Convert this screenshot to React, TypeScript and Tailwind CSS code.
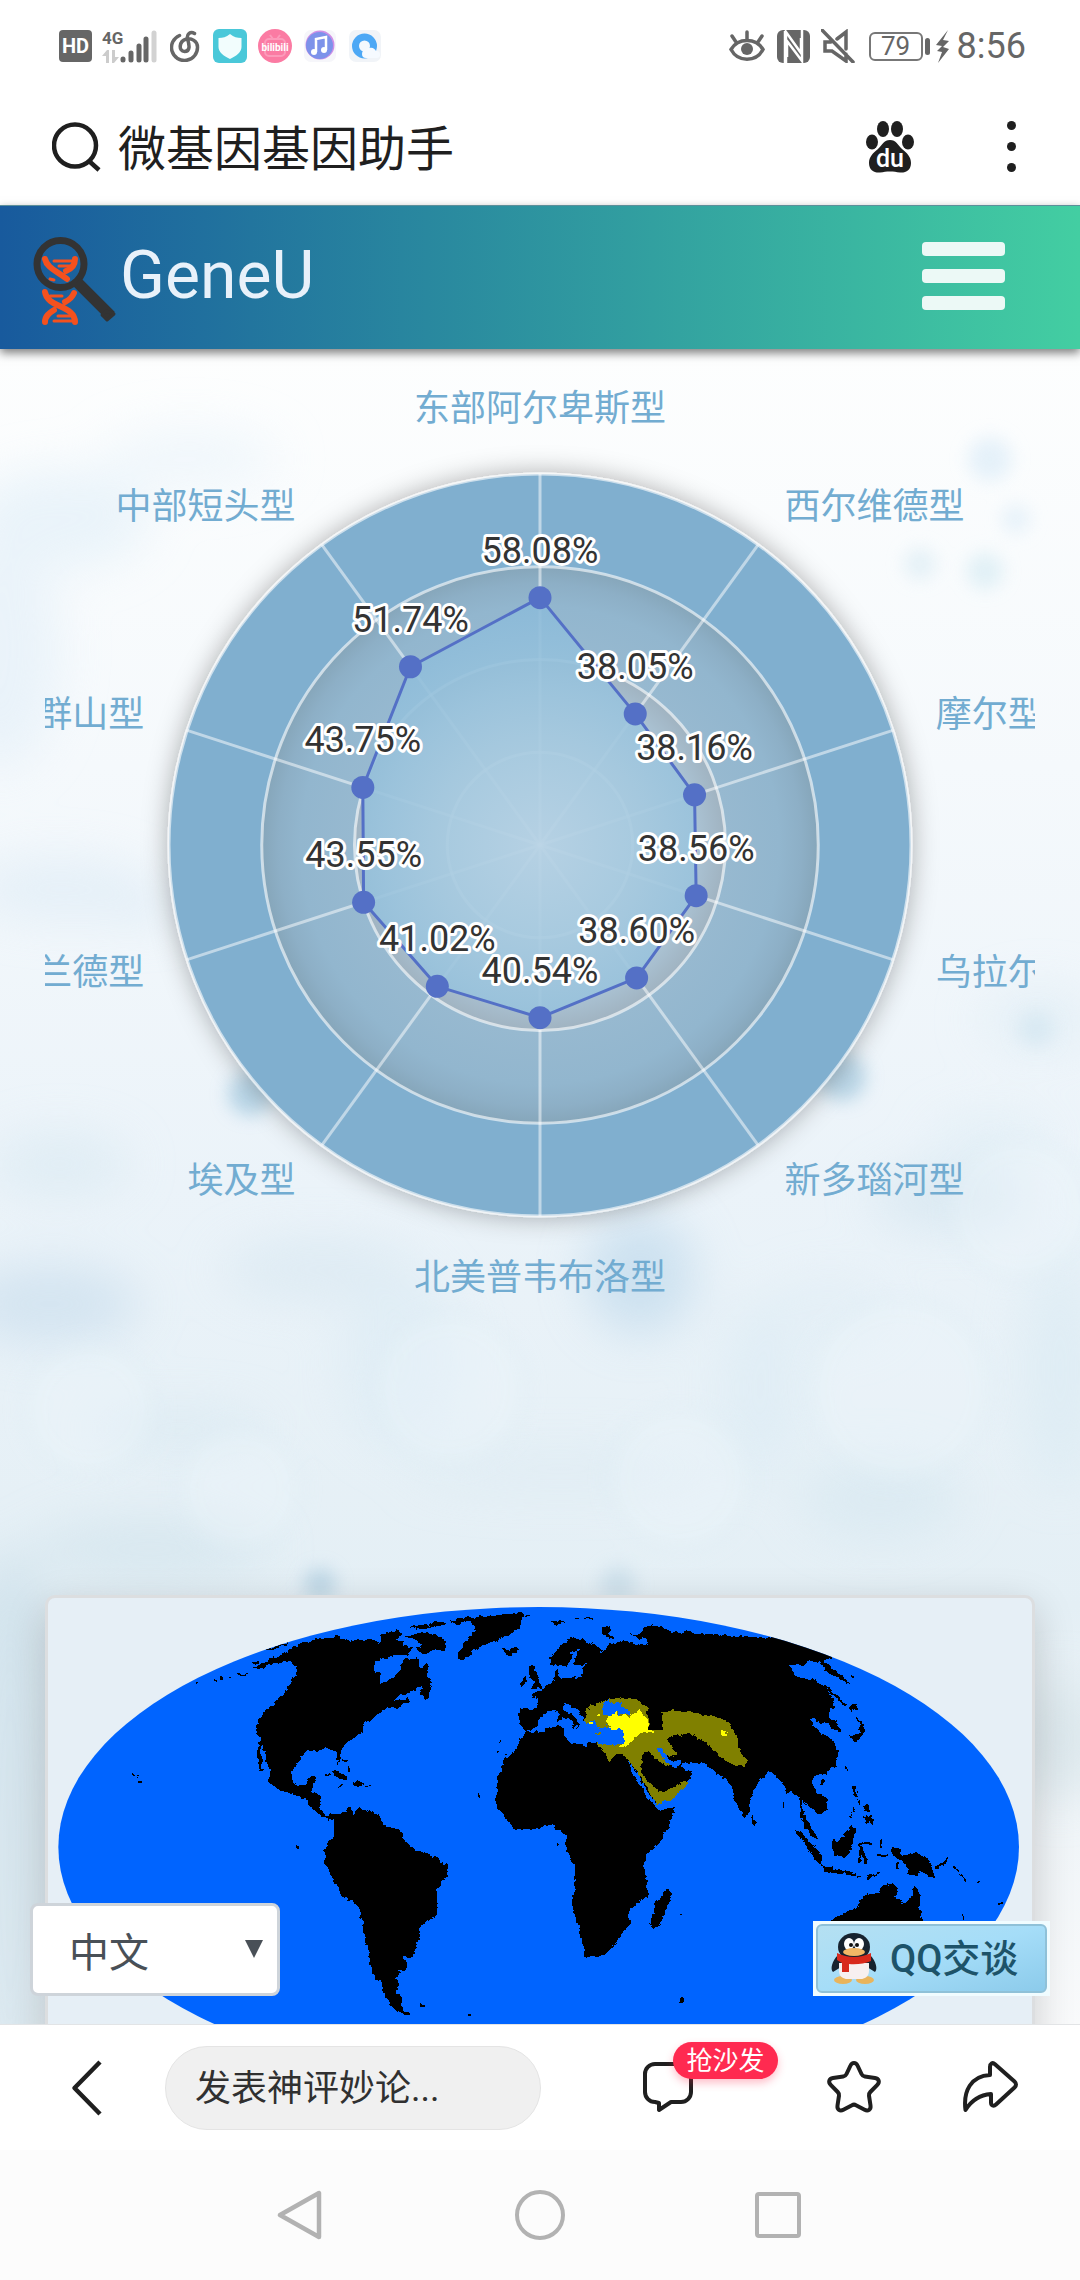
import type { ReactNode } from "react";

const types = [
    { name: "东部阿尔卑斯型", value: 58.08 },
    { name: "西尔维德型", value: 38.05 },
    { name: "摩尔型", value: 38.16 },
    { name: "乌拉尔", value: 38.56 },
    { name: "新多瑙河型", value: 38.6 },
    { name: "北美普韦布洛型", value: 40.54 },
    { name: "埃及型", value: 41.02 },
    { name: "兰德型", value: 43.55 },
    { name: "群山型", value: 43.75 },
    { name: "中部短头型", value: 51.74 },
];

const CX = 495;
const CY = 496;
const RADIUS = 371;
const MAX = 87.12;

function polar(index: number, r: number) {
    const angle = (index * Math.PI * 2) / types.length;
    return { x: CX + r * Math.sin(angle), y: CY - r * Math.cos(angle) };
}

function StatusBar() {
    return (
        <div className="flex h-[92px] items-center justify-between pl-[59px] pr-[54px] text-[#666]">
            <div className="flex items-center">
                <span className="flex h-8 w-[33px] items-center justify-center rounded bg-[#666] text-[20px] font-bold text-white">
                    HD
                </span>
                <svg className="ml-2.5 h-9 w-[56px]" viewBox="0 0 56 36">
                    <text x="0" y="16" fontSize="17" fontWeight="700" fill="#666">4G</text>
                    <path d="M0 28l5-6h2v13H4v-7ZM10 22h3v7h4l-5 6h-2Z" fill="#ccc" />
                    <g strokeWidth="5" strokeLinecap="round" stroke="#666">
                        <path d="M21 31v1M29 25v7M37 18v14M44 11v21" />
                        <path d="M52 5v27" stroke="#d2d2d2" />
                    </g>
                </svg>
                <svg className="ml-3 h-8 w-[30px]" viewBox="0 0 29 32" fill="none" stroke="#666" strokeWidth="3.500" strokeLinecap="round">
                    <path d="M9 5.500A13 13 0 1 0 27 17C27 11 21 8 16 9 8 11 8 21.500 14 21.500c6 0 5-6.500 3-12.500-1-5 3-8 7-5.500" />
                </svg>
                <svg className="ml-[13px] size-[34px]" viewBox="0 0 34 34">
                    <rect width="34" height="34" rx="6" fill="#4ac8d9" />
                    <path d="M17 5c4 3 7 4 11.500 4v9c0 5-5 9-11.500 12C10.500 27 5.500 23 5.500 18V9C10 9 13 8 17 5Z" fill="#f2fdfd" />
                </svg>
                <svg className="ml-[11px] size-[34px]" viewBox="0 0 34 34">
                    <circle cx="17" cy="17" r="17" fill="#fb7ba3" />
                    <rect x="7" y="10" width="20" height="17" rx="4" fill="none" stroke="#fc9aba" strokeWidth="2" />
                    <path d="M12 6l3 4M22 6l-3 4" stroke="#fc9aba" strokeWidth="2" />
                    <text x="17" y="22" fontSize="10" fontWeight="700" textAnchor="middle" fill="#fff">bilibili</text>
                </svg>
                <svg className="ml-3 size-8" viewBox="0 0 32 32">
                    <rect width="32" height="32" rx="7" fill="#f6f6fa" />
                    <circle cx="16" cy="15" r="14.500" fill="#cf8fe6" />
                    <circle cx="15.500" cy="15.500" r="13.500" fill="#7d92ea" />
                    <path d="M12 22V9l10-2v13" fill="none" stroke="#fff" strokeWidth="2.500" />
                    <circle cx="10" cy="22" r="3" fill="#fff" />
                    <circle cx="20" cy="20" r="3" fill="#fff" />
                </svg>
                <svg className="ml-[13px] size-8" viewBox="0 0 32 32">
                    <rect width="32" height="32" rx="7" fill="#f1f4f8" />
                    <circle cx="15.500" cy="16" r="9" fill="#f4f8fd" stroke="#4da8f5" strokeWidth="7" />
                    <path d="M17 28a4 4 0 0 1 0-8 6 6 0 0 1 10 1 3.500 3.500 0 0 1 1 7Z" fill="#f6faff" />
                </svg>
            </div>
            <div className="flex items-center">
                <svg className="h-8 w-9" viewBox="0 0 36 32" fill="none" stroke="#666" strokeWidth="3.500" strokeLinecap="round">
                    <path d="M2 19.500C9 7.500 27 7.500 34 19.500 27 32.500 9 32.500 2 19.500ZM18 2v7M3 6l4 6M33 6l-4 6" />
                    <circle cx="18" cy="19" r="6" fill="#666" stroke="none" />
                </svg>
                <svg className="ml-3 size-[33px]" viewBox="0 0 33 33">
                    <rect width="33" height="33" rx="6" fill="#666" />
                    <path d="M8 33V1M9 33V2l15 21V8M25 0v31L10 11v16" fill="none" stroke="#fff" strokeWidth="2.500" />
                </svg>
                <svg className="ml-[11px] size-[34px]" viewBox="0 0 34 34" fill="none" stroke="#666" strokeWidth="3.500">
                    <path d="M1 1l31 32M25 20V3l-9 7M10 13H4v9h7l14 10v-7" strokeLinecap="round" />
                </svg>
                <span className="ml-3.5 flex h-[29px] w-[54px] items-center justify-center rounded-md border-2 border-[#777] text-[26px] leading-none">
                    79
                </span>
                <span className="ml-0.5 h-[17px] w-[5px] rounded-sm bg-[#666]" />
                <svg className="ml-1.5 h-[33px] w-[13px]" viewBox="0 0 13 33">
                    <path d="M12 0L0 15l6 1-5 5 5 1-4 11 11-14-6-2 6-6-6-1Z" fill="#666" />
                </svg>
                <span className="ml-2 text-[36px] leading-none">8:56</span>
            </div>
        </div>
    );
}

function SearchBar() {
    return (
        <div className="flex h-[113px] items-center pb-1 pl-[52px] pr-[60px]">
            <svg className="size-[50px] shrink-0" viewBox="0 0 50 50" fill="none" stroke="#1f1f1f" strokeWidth="4.500">
                <circle cx="23" cy="23.500" r="21" />
                <path d="M37 39l10 9" />
            </svg>
            <input
                type="text"
                aria-label="搜索"
                defaultValue="微基因基因助手"
                className="ml-4 h-16 min-w-0 flex-1 bg-transparent pb-1 text-[48px] leading-none text-[#1f1f1f] outline-none"
            />
            <button aria-label="百度" className="ml-6">
                <svg className="h-[52px] w-12" viewBox="0 0 48 52" fill="#1f1f1f">
                    <ellipse cx="6" cy="21" rx="6" ry="7.500" />
                    <ellipse cx="17" cy="8" rx="6" ry="8" />
                    <ellipse cx="31" cy="8" rx="6" ry="8" />
                    <ellipse cx="42" cy="21" rx="6" ry="7.500" />
                    <path d="M24 19c6 0 8 5 12 9 5 4 9 8 9 14 0 7-5 10-11 9.500-4-.5-6-1-10-1s-6 .5-10 1C8 52 3 49 3 42c0-6 4-10 9-14 4-4 6-9 12-9Z" />
                    <text x="24" y="46" fontSize="25" fontWeight="500" textAnchor="middle" fill="#fff">du</text>
                </svg>
            </button>
            <button aria-label="更多" className="ml-[88px] flex w-[18px] flex-col items-center gap-3">
                <span className="size-[9px] rounded-full bg-[#1f1f1f]" />
                <span className="size-[9px] rounded-full bg-[#1f1f1f]" />
                <span className="size-[9px] rounded-full bg-[#1f1f1f]" />
            </button>
        </div>
    );
}

function Header() {
    return (
        <header className="relative z-10 flex h-36 items-center justify-between border-t border-[#5d8f9a] bg-gradient-to-r from-[#185a9d] to-[#43cea2] pb-[3px] pl-[33px] pr-[75px] shadow-[0_4px_9px_rgba(0,0,0,0.5)] [--tw-gradient-position:to_right]">
            <a href="#" className="flex items-center gap-px text-[66px] leading-none text-[#e8f1fa]">
                <svg className="mt-3 h-[90px] w-[86px]" viewBox="0 0 86 90" fill="none">
                    <g stroke="#f4511e" strokeWidth="6" strokeLinecap="round">
                        <path d="M12 22c2 9 12 12 22 20M42 22c0 6-4 10-9 12M12 55c2 16 30 13 30 30M41 56c-2 5-5 7-9 9M12 85c0-6 4-9 9-12" />
                        <path d="M21 24h18M26 29h11M17 42l4 1M17 59h12M21 84h18M25 79h12" strokeWidth="3" />
                    </g>
                    <circle cx="27.500" cy="27" r="23.500" stroke="#333" strokeWidth="7" />
                    <path d="M44 45l34 34" stroke="#333" strokeWidth="11" />
                    <path d="M73 74l8 3-7 6-5-5Z" fill="#333" stroke="#333" strokeWidth="3" strokeLinejoin="round" />
                </svg>
                GeneU
            </a>
            <button aria-label="菜单" className="flex w-[83px] flex-col gap-[13px]">
                <span className="h-3.5 rounded bg-white/90" />
                <span className="h-3.5 rounded bg-white/90" />
                <span className="h-3.5 rounded bg-white/90" />
            </button>
        </header>
    );
}

const blobs = [
    [60, 170, 90, 50, "#dfeef8"], [190, 110, 90, 30, "#e8f3fa"], [60, 540, 90, 30, "#dbeaf5"],
    [0, 300, 60, 120, "#e1eef8"], [140, 560, 40, 14, "#d5e6f3"], [60, 815, 70, 30, "#d7e8f1"],
    [50, 955, 90, 40, "#c6dcec"], [320, 920, 100, 30, "#d6e6f0"], [640, 925, 55, 60, "#b9d6ea"],
    [950, 850, 80, 30, "#cfe2ed"], [990, 790, 60, 20, "#dcecf4"], [830, 960, 60, 30, "#e0edf5"],
    [1040, 670, 60, 30, "#deecf4"], [150, 1200, 120, 30, "#cfe2eb"], [10, 1500, 60, 300, "#c6dce7"],
    [1060, 1390, 50, 60, "#d3e1e6"], [560, 1120, 150, 20, "#dceaf2"], [880, 1150, 80, 40, "#d5e7f0"],
    [180, 1080, 90, 20, "#d6e7f0"], [400, 1010, 60, 90, "#dbebf4"], [760, 1040, 40, 90, "#dbebf4"],
    [1060, 1020, 40, 120, "#d9eaf3"],
] as const;

const dots = [
    [250, 745, 22, "#a3c9e0"], [842, 728, 24, "#a3c8de"], [990, 110, 22, "#dcecf8"], [985, 222, 18, "#d6ebf3"],
    [920, 215, 16, "#dcecf4"], [1016, 170, 14, "#deedf8"], [320, 1235, 16, "#aecde0"], [618, 1235, 18, "#c6dce8"],
    [1036, 680, 18, "#d3e6f1"],
] as const;

const cells = [
    [450, 1040, 75], [900, 1040, 90], [240, 1140, 60], [680, 1130, 70], [90, 1060, 65], [1020, 860, 70],
];

function Backdrop() {
    return (
        <svg className="absolute inset-0 size-full" viewBox="0 0 1080 1675" preserveAspectRatio="none">
            <defs>
                <linearGradient id="sky" x1="0" y1="0" x2="0" y2="1">
                    <stop offset="0" stopColor="#fdfefe" />
                    <stop offset="0.25" stopColor="#f5f9fc" />
                    <stop offset="0.5" stopColor="#ebf3f9" />
                    <stop offset="0.75" stopColor="#e4eff5" />
                    <stop offset="0.85" stopColor="#edf3f7" />
                    <stop offset="1" stopColor="#f9fafb" />
                </linearGradient>
                <filter id="haze" x="-20%" y="-20%" width="140%" height="140%">
                    <feGaussianBlur stdDeviation="24" />
                </filter>
                <filter id="soft" x="-20%" y="-20%" width="140%" height="140%">
                    <feGaussianBlur stdDeviation="9" />
                </filter>
            </defs>
            <rect width="1080" height="1675" fill="url(#sky)" />
            <g filter="url(#haze)" opacity="0.6">
                {blobs.map(([x, y, rx, ry, fill]) => (
                    <ellipse key={`${x}-${y}`} cx={x} cy={y} rx={rx} ry={ry} fill={fill} />
                ))}
            </g>
            <g filter="url(#soft)" opacity="0.7">
                {cells.map(([x, y, r]) => (
                    <circle key={`${x}-${y}`} cx={x} cy={y} r={r} fill="#eef5fb" fillOpacity="0.5" stroke="#dcebf4" strokeWidth="8" strokeOpacity="0.6" />
                ))}
                {dots.map(([x, y, r, fill]) => (
                    <circle key={`${x}-${y}`} cx={x} cy={y} r={r} fill={fill} />
                ))}
            </g>
        </svg>
    );
}

function RadarChart() {
    const points = types.map((t, i) => polar(i, (t.value / MAX) * RADIUS));
    const outline = points.map((p) => `${p.x},${p.y}`).join(" ");

    return (
        <svg className="block w-full" viewBox="0 0 990 990" role="img" aria-label="GeneU">
            <defs>
                <radialGradient id="band3">
                    <stop offset="0.670" stopColor="#97b9d0" />
                    <stop offset="0.860" stopColor="#92b6ce" />
                    <stop offset="0.940" stopColor="#8dafc6" />
                    <stop offset="1" stopColor="#86a6ba" />
                </radialGradient>
                <radialGradient id="band2">
                    <stop offset="0.6" stopColor="#b3c8d8" />
                    <stop offset="0.85" stopColor="#aac2d3" />
                    <stop offset="1" stopColor="#a0b3c1" />
                </radialGradient>
                <radialGradient id="area" gradientUnits="userSpaceOnUse" cx={CX} cy={CY} r="248">
                    <stop offset="0" stopColor="#b5d1e4" />
                    <stop offset="0.4" stopColor="#a5c9df" />
                    <stop offset="0.75" stopColor="#94c0db" />
                    <stop offset="1" stopColor="#8ab9d8" />
                </radialGradient>
                <filter id="glow" x="-15%" y="-15%" width="130%" height="130%">
                    <feDropShadow dx="0" dy="0" stdDeviation="13" floodColor="#000" floodOpacity="0.32" />
                </filter>
            </defs>

            <g stroke="#fff" strokeOpacity="0.6" strokeWidth="3">
                <circle cx={CX} cy={CY} r={RADIUS} fill="#80afcf" filter="url(#glow)" />
                <circle cx={CX} cy={CY} r={RADIUS * 0.75} fill="url(#band3)" />
                <circle cx={CX} cy={CY} r={RADIUS * 0.5} fill="url(#band2)" />
                <circle cx={CX} cy={CY} r={RADIUS * 0.25} fill="#bcd1df" />
                {types.map((t, i) => {
                    const end = polar(i, RADIUS);
                    return <line key={t.name} x1={CX} y1={CY} x2={end.x} y2={end.y} strokeOpacity="0.5" />;
                })}
            </g>

            <polygon points={outline} fill="url(#area)" fillOpacity="0.9" />
            <polygon points={outline} fill="none" stroke="#5470c6" strokeWidth="3" strokeLinejoin="round" />
            {points.map((p, i) => (
                <circle key={i} cx={p.x} cy={p.y} r="11.500" fill="#5470c6" />
            ))}

            <g fontSize="36" textAnchor="middle" fill="#333" stroke="#fff" strokeWidth="6" strokeLinejoin="round" className="[paint-order:stroke]">
                {types.map((t, i) => (
                    <text key={t.name} x={points[i].x} y={points[i].y - 35}>
                        {t.value.toFixed(2)}%
                    </text>
                ))}
            </g>

            <g fontSize="36" fill="#72acd1">
                {types.map((t, i) => {
                    const p = polar(i, RADIUS + 45);
                    const anchor = i % 5 === 0 ? "middle" : i < 5 ? "start" : "end";
                    const shift = i === 0 ? -8 : i === 5 ? 29 : 11;
                    return (
                        <text key={t.name} x={p.x} y={p.y + shift} textAnchor={anchor}>
                            {t.name}
                        </text>
                    );
                })}
            </g>
        </svg>
    );
}

function WorldMap() {
    return (
        <svg className="block w-full" viewBox="24 54 2952 1520" role="img" aria-label="世界地图">
            <defs>
                <clipPath id="globe">
                    <ellipse cx="1496" cy="801" rx="1441" ry="720" />
                </clipPath>
                <filter id="coast" x="0" y="0" width="100%" height="100%">
                    <feTurbulence type="fractalNoise" baseFrequency="0.06" numOctaves="2" seed="4" />
                    <feDisplacementMap in="SourceGraphic" scale="18" xChannelSelector="R" yChannelSelector="G" />
                </filter>
            </defs>
            <g clipPath="url(#globe)">
                <rect width="3000" height="1600" fill="#0064ff" />
                <g filter="url(#coast)" shapeRendering="crispEdges">
                    {/* Americas */}
                    <path d="M640 262L665 250 690 236 720 226 735 215 775 195 830 177 885 168 930 182 1000 180 1020 188 1080 190 1120 205 1100 225 1060 228 1005 245 1000 265 1020 285 1020 315 1045 300 1080 275 1090 240 1130 232 1145 262 1165 252 1158 280 1175 305 1165 355 1140 345 1145 320 1110 335 1080 345 1062 362 1105 355 1110 365 1070 385 1040 382 1010 405 990 425 968 435 968 455 940 475 905 500 903 540 892 550 888 515 860 505 835 515 800 512 775 540 755 575 757 610 775 618 798 610 805 592 830 592 812 640 850 645 840 685 860 708 905 700 935 680 940 700 955 685 990 695 1020 705 1035 738 1065 742 1085 760 1100 795 1140 815 1185 828 1200 848 1220 852 1220 890 1190 930 1192 965 1185 1015 1160 1020 1138 1045 1135 1080 1118 1130 1095 1132 1085 1122 1102 1150 1098 1168 1075 1172 1078 1188 1065 1190 1075 1210 1068 1240 1085 1250 1085 1290 1115 1300 1108 1310 1085 1300 1060 1285 1035 1245 1020 1205 1005 1195 992 1160 985 1110 972 1050 958 980 905 945 885 905 862 860 850 850 860 825 850 812 865 785 882 765 882 712 865 722 840 705 820 690 805 665 770 645 740 640 710 625 687 605 690 570 675 535 672 495 662 495 668 572 660 572 650 530 660 480 648 455 655 425 670 400 700 375 730 345 745 320 768 285 772 262 750 240 720 250 690 255 660 268Z" />
                    <path d="M680 208L745 186 740 194 690 212Z" />
                    <path d="M870 572h20l30 20 8 10-30-5zM935 608l20-5 15 10-25 8zM895 617h12v5h-12zM975 617h14v5h-14zM855 582h14v5h-14zM905 540h20v5h-20zM925 560h5v15h-5z" />
                    <path d="M275 580h8v5h-8zM287 585h6v5h-6zM296 603h10v9h-10zM768 797h5v10h-5zM468 308h6v6h-6zM522 300h8v5h-8zM540 295h10v4h-10zM568 286h8v5h-8zM595 281h25v4h-25zM640 246h15v5h-15z" />
                    {/* Arctic islands and Greenland */}
                    <path d="M1022 165l50-15 15 15-25 10 30 10-40 25-30-5zM1095 172l40-15 50 5 35 25-5 25-35-5-25 20-30-20 25-15-20-10zM1105 142l55-10 15 8-30 8zM1165 132l40-10 15 10-30 10zM1230 125l60-18 15 10-55 18zM1160 185l35-12 25 12-25 18zM1130 205l25-10 20 15-20 15z" />
                    <path d="M1255 215l30-35 20-30-10-22 15-20 90-6 50-4-8 45-52 30-55 25-35 10-30 35-15-8z" />
                    <path d="M1390 208l40-3 5 10-25 10-15-8zM1455 106h14v6h-14zM1528 120h42v6l-22 12zM1610 114h8v4h-8zM1632 112h24v5h-24zM1688 142l22-6 2 10-12 12 20 14-15 4-14-12zM1734 114h7v4h-7zM1780 122h6v5h-6z" />
                    {/* Africa */}
                    <path d="M1460 458L1495 455 1540 440 1570 440 1575 475 1620 490 1642 502 1648 485 1740 490 1760 530 1770 560 1790 600 1820 650 1845 680 1855 692 1905 680 1890 740 1860 785 1820 825 1810 860 1820 900 1820 950 1765 992 1770 1035 1745 1060 1720 1100 1695 1125 1635 1130 1625 1075 1610 1015 1595 975 1605 920 1600 850 1575 800 1580 765 1560 748 1545 752 1540 735 1510 735 1495 748 1425 748 1395 710 1368 672 1375 590 1395 540 1425 510 1440 480Z" />
                    <path d="M1885 922l8 18-13 45-20 50-20 13-10-13 15-70 25-20z" />
                    {/* Eurasia */}
                    <path d="M1440 388L1490 385 1495 355 1472 348 1510 325 1545 302 1545 275 1555 270 1560 292 1600 292 1590 265 1560 258 1530 255 1530 235 1565 195 1600 172 1650 185 1690 208 1675 218 1650 205 1685 222 1710 195 1750 180 1790 192 1825 200 1820 170 1795 178 1760 155 1790 165 1825 135 1870 142 1890 155 1960 158 2040 165 2190 175 2200 165 2380 220 2375 234 2350 245 2435 312 2420 308 2370 280 2335 245 2305 240 2295 255 2250 255 2265 290 2320 298 2350 318 2375 345 2385 385 2365 390 2370 412 2400 440 2405 460 2385 450 2360 428 2330 430 2325 410 2308 420 2340 455 2380 485 2395 510 2390 555 2360 580 2325 590 2315 605 2325 630 2358 655 2362 688 2335 705 2310 680 2290 660 2285 690 2310 735 2332 778 2320 778 2295 740 2280 712 2280 665 2260 635 2240 640 2230 610 2190 570 2160 600 2132 645 2130 690 2115 715 2090 675 2065 600 2040 590 1995 550 1925 548 1920 562 1950 575 1953 590 1940 612 1905 650 1850 675 1820 630 1790 580 1755 525 1735 518 1700 500 1600 470 1500 450 1462 456 1450 442 1435 430Z" />
                    <path d="M1448 298l14-8 3 16-18 12-8-4zM1465 262l20-2 5 28 16 28-4 9-28-2 8-18-12-14zM1490 245h4v4h-4z" />
                    {/* Shaded range */}
                    <path fill="#808000" d="M1633 412L1640 385 1690 363 1745 355 1790 358 1820 380 1828 450 1870 450 1865 395 1890 390 1970 400 2040 415 2070 430 2085 460 2095 500 2120 540 2118 562 2080 555 2040 530 2005 495 1960 462 1900 465 1882 480 1912 520 1900 532 1875 520 1888 560 1855 545 1825 512 1805 520 1805 580 1855 635 1875 635 1940 602 1945 612 1905 650 1850 675 1820 620 1755 525 1735 520 1708 542 1670 490 1640 440Z" />
                    {/* Inland seas */}
                    <path fill="#0064ff" d="M1462 455L1490 436 1500 412 1535 388 1565 388 1580 368 1625 405 1640 430 1660 420 1680 410 1705 440 1750 450 1752 492 1690 495 1665 488 1645 488 1642 502 1600 488 1576 475 1570 440 1540 440 1495 456Z" />
                    <path fill="#0064ff" d="M1688 370l18-10 14 12 32-12-12 16 30 18 4 12-44-6-42 8zM1852 505l14 4 26 32 30 2-8 18-22-2-26-28zM1595 215l22-6-17 42 20 5 20-8-14 17 2 25-18 5-15-6-15-30 12-24z" />
                    <path d="M1540 388l22-10 10 18 22 8 26 26-4 10-10-2-10-16-34-18zM1590 434l20 4-6 8zM1555 402h10v22h-10z" />
                    <path fill="#808000" d="M1640 405l35-10 25 10-5 20 15 28-15-15-20 5-15-25zM1665 458h18v4h-18z" />
                    <path fill="#ff0" d="M1700 408L1725 400 1770 410 1795 390 1820 415 1828 448 1842 455 1800 462 1770 485 1760 502 1735 500 1752 490 1750 450 1730 445 1710 450 1702 425ZM1648 425h12v6h-12zM1670 402h12v6h-12zM2046 452h8v8h10v8h-14z" />
                    {/* East Asia and Oceania */}
                    <path d="M2440 405l25 20 15 25-35 40-15-20 27-13 3-27zM2425 385l20-15 12 18-30 5zM2352 320l8-2 62 58-4 4zM2415 555h6l3 20h-6zM2340 600l14-4v14l-10 8zM2136 706l12 20-4 12-8-8zM2228 665h5v20h-5zM2432 285h9v5h-9z" />
                    <path d="M2438 618h10v15l8 18h-12zM2450 655l12 10-4 10zM2468 680l18-6v18h-14zM2470 712l30-8v30l-14-12-12 12zM2442 680h4l-12 35h-4z" />
                    <path d="M2262 748l25 12 30 30 30 35-4 30-16-14-26-40zM2340 856l55 14 50 10v6l-80-8zM2375 780h25l35-42 14 7-8 45-22 42-35-7-9-16zM2455 788l44-2v5l-40 3 15 18 8 38-8-2-10-25-4 25h-6l4-42zM2450 888h14v6h-14zM2480 890l40-14-20 16-24 10zM2522 778h8v25h-8zM2510 825h35v5h-35z" />
                    <path d="M2552 802l22 4 10 18 46-6 34 20 10 32 16 24-22-4-28-22-6 20-34-6 8-16-26-26-26-16zM2685 855l20-2 15-22 5 8-15 22-25 4zM2740 855l18 20-4 2-16-18zM2762 880l20 24-6 2-16-22zM2812 902h8v6h-8zM2762 1000l15 14-6 4zM2875 970h14v5h-14zM2572 850h6v14h-6z" />
                    <path d="M2360 1025L2450 985 2460 960 2490 940 2515 940 2530 910 2575 920 2565 950 2590 970 2610 960 2625 910 2640 945 2638 985 2650 1025 2640 1120 2400 1120Z" />
                    <path d="M1138 1275h18v7h-18zM1285 1298h9v7h-9zM1920 1255h10v10h-10zM1920 1002h10v5h-10zM1376 481h6v4h-6zM1368 517h5v5h-5zM1395 522h5v4h-5zM1315 640h5v12h-5zM1548 793h5v5h-5z" />
                </g>
            </g>
        </svg>
    );
}

function QQButton() {
    return (
        <button className="absolute bottom-7 right-[30px] h-[75px] w-[237px] bg-[#f0fcff] p-[3px]">
            <span className="flex size-full items-center gap-3 rounded-md border-2 border-[#8fc1d8] bg-gradient-to-br from-[#b5e0f2] via-[#a5ddf8] to-[#8ccbeb] pl-3 text-[38px] font-medium leading-none text-[#1d5369]">
                <svg className="h-[52px] w-[48px] shrink-0" viewBox="0 0 48 52">
                    <ellipse cx="13" cy="47" rx="9" ry="4" fill="#e9b45c" />
                    <ellipse cx="35" cy="47" rx="9" ry="4" fill="#e9b45c" />
                    <path d="M8 22C2 28 0 36 3 39l8-5 26 0 8 5c3-3 1-11-5-17Z" fill="#17232f" />
                    <path d="M9 30h30v8c0 6-5 8-8 8H17c-3 0-8-2-8-8Z" fill="#f7f0f0" />
                    <ellipse cx="24" cy="14" rx="16" ry="14" fill="#17232f" />
                    <ellipse cx="19" cy="11" rx="5" ry="6" fill="#fff" />
                    <ellipse cx="29" cy="11" rx="5" ry="6" fill="#fff" />
                    <circle cx="21" cy="12" r="2" fill="#111" />
                    <circle cx="27" cy="12" r="2" fill="#111" />
                    <ellipse cx="24" cy="19" rx="11" ry="4" fill="#f2b765" />
                    <path d="M7 20q17 8 34 0v8q-10 4-22 3v8h-7v-9l-5-3Z" fill="#d8291c" />
                </svg>
                QQ交谈
            </span>
        </button>
    );
}

function IconButton({ label, children }: { label: string; children: ReactNode }) {
    return (
        <button aria-label={label}>
            <svg className="size-14" viewBox="0 0 56 56" fill="none" stroke="#1f1f1f" strokeWidth="4" strokeLinejoin="round">
                {children}
            </svg>
        </button>
    );
}

function CommentBar() {
    return (
        <div className="relative z-10 flex h-[126px] items-center border-t border-[#e2e4e6] bg-white pl-[70px] pr-[62px]">
            <button aria-label="返回">
                <svg className="h-14 w-8" viewBox="0 0 32 56" fill="none" stroke="#1f1f1f" strokeWidth="4.500" strokeLinejoin="round">
                    <path d="M30 2L4.500 28 30 54" />
                </svg>
            </button>
            <input
                type="text"
                aria-label="评论"
                placeholder="发表神评妙论..."
                className="ml-[63px] h-[84px] w-0 max-w-[376px] flex-1 rounded-full border border-[#e4e4e4] bg-[#f0f0f0] px-[29px] pt-0.5 text-[36px] text-[#303030] outline-none placeholder:text-[#303030]"
            />
            <div className="ml-auto flex items-center gap-20">
                <div className="relative mr-12 flex">
                    <IconButton label="评论列表">
                        <path d="M13 4h26a10 10 0 0 1 10 10v18a10 10 0 0 1-10 10H29L17 50V43l-4-1A10 10 0 0 1 3 32V14A10 10 0 0 1 13 4Z" />
                    </IconButton>
                    <span className="absolute -top-[18px] left-[31px] flex h-[37px] w-[105px] items-center justify-center rounded-full bg-[#ff2a50] pt-0.5 text-[26px] leading-none text-white shadow-[0_4px_8px_rgba(255,42,80,0.3)]">
                        抢沙发
                    </span>
                </div>
                <IconButton label="收藏">
                    <path d="M24.500 5.500c1.500-3.500 5.500-3.500 7 0l4 8.500c.7 1.500 1.700 2.300 3.300 2.500l10.200 1.500c4 .6 5 4 2.300 6.800l-7 7.200c-1 1-1.500 2.200-1.300 3.600l1.500 9.900c.6 4-2.400 6-5.900 4.200l-8.600-4.500a4 4 0 0 0-4 0l-8.600 4.500c-3.500 1.800-6.500-.2-5.900-4.200l1.500-9.900c.2-1.400-.3-2.600-1.300-3.600l-7-7.200C2 22 3 18.600 7 18l10.200-1.500c1.600-.2 2.600-1 3.300-2.500Z" />
                </IconButton>
                <IconButton label="分享">
                    <path d="M28 15V7c0-3.500 2.500-5 5-2.800l19.500 17.300c2 1.800 2 4 0 6L34 44.500c-2.500 2.300-5 1-5-2V34C17 35 9 41 3.500 50 1 31 9 16 28 15Z" />
                </IconButton>
            </div>
        </div>
    );
}

function SystemNav() {
    return (
        <nav className="flex h-[130px] items-center justify-center gap-[190px] bg-[#fcfcfc] text-[#b2b2b2]">
            <button aria-label="后退">
                <svg className="size-[50px]" viewBox="0 0 50 50" fill="none" stroke="currentColor" strokeWidth="4.500" strokeLinejoin="round">
                    <path d="M44 3v44L5 25Z" />
                </svg>
            </button>
            <button aria-label="主页" className="size-[50px] rounded-full border-4 border-current" />
            <button aria-label="最近任务" className="mr-1 size-[46px] rounded border-4 border-current" />
        </nav>
    );
}

function App() {
    return (
        <div className="flex h-screen flex-col bg-white font-[Roboto,'Noto_Sans_CJK_SC',sans-serif]">
            <StatusBar />
            <SearchBar />
            <Header />
            <main className="relative min-h-0 flex-1 overflow-hidden">
                <Backdrop />
                <div className="relative px-[45px]">
                    <RadarChart />
                    <div className="mt-64 overflow-hidden rounded-[10px] border-[3px] border-[#dcdee0] bg-[#e6eff6] shadow-[0_12px_40px_rgba(0,0,0,0.18)]">
                        <WorldMap />
                    </div>
                </div>
                <div className="absolute bottom-7 left-[30px] h-[93px] w-[250px]">
                    <select
                        aria-label="语言"
                        className="size-full appearance-none rounded-lg border-[3px] border-[#ced4da] bg-white pl-9 pt-2 text-[40px] text-[#495057]"
                    >
                        <option>中文</option>
                        <option>English</option>
                    </select>
                    <svg className="pointer-events-none absolute right-[17px] top-[37px] h-[18px] w-[18px]" viewBox="0 0 18 18">
                        <path d="M0 0h18L9 18Z" fill="#495057" />
                    </svg>
                </div>
                <QQButton />
            </main>
            <CommentBar />
            <SystemNav />
        </div>
    );
}

export default App;
